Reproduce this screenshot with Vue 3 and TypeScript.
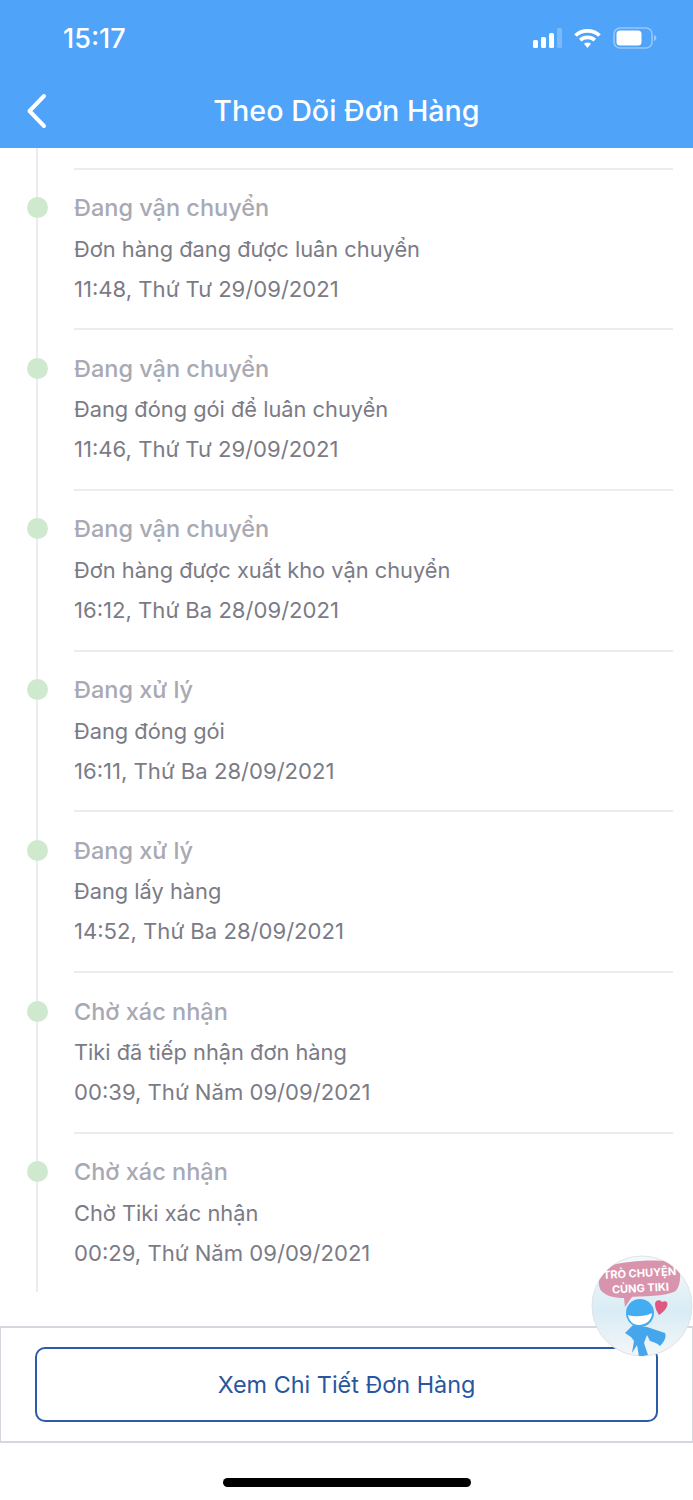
<script setup lang="ts">
interface TrackingStep {
  status: string;
  detail: string;
  time: string;
}

const steps: TrackingStep[] = [
  { status: 'Đang vận chuyển', detail: 'Đơn hàng đang được luân chuyển', time: '11:48, Thứ Tư 29/09/2021' },
  { status: 'Đang vận chuyển', detail: 'Đang đóng gói để luân chuyển', time: '11:46, Thứ Tư 29/09/2021' },
  { status: 'Đang vận chuyển', detail: 'Đơn hàng được xuất kho vận chuyển', time: '16:12, Thứ Ba 28/09/2021' },
  { status: 'Đang xử lý', detail: 'Đang đóng gói', time: '16:11, Thứ Ba 28/09/2021' },
  { status: 'Đang xử lý', detail: 'Đang lấy hàng', time: '14:52, Thứ Ba 28/09/2021' },
  { status: 'Chờ xác nhận', detail: 'Tiki đã tiếp nhận đơn hàng', time: '00:39, Thứ Năm 09/09/2021' },
  { status: 'Chờ xác nhận', detail: 'Chờ Tiki xác nhận', time: '00:29, Thứ Năm 09/09/2021' },
];
</script>

<template>
  <div class="screen">
    <header class="top-bar">
      <div class="status-bar">
        <span class="clock">15:17</span>
        <div class="status-icons">
          <svg width="29" height="20" viewBox="0 0 29 20">
            <rect x="0" y="12" width="5" height="8" rx="1.5" fill="#fff" />
            <rect x="8" y="9" width="5" height="11" rx="1.5" fill="#fff" />
            <rect x="16" y="5" width="5" height="15" rx="1.5" fill="#fff" />
            <rect x="24" y="0" width="5" height="20" rx="1.5" fill="#fff" opacity="0.25" />
          </svg>
          <svg width="27" height="20" viewBox="0 0 27 20" fill="none" stroke="#fff" stroke-width="3.8">
            <path d="M1.5 7.5C8 1.2 19 1.2 25.5 7.5" />
            <path d="M6.2 12.2C10.5 8.4 16.5 8.4 20.8 12.2" />
            <path d="M10 15.8L13.5 20L17 15.8C15 14.2 12 14.2 10 15.8Z" fill="#fff" stroke="none" />
          </svg>
          <svg width="44" height="22" viewBox="0 0 44 22">
            <rect x="1" y="1" width="38" height="20" rx="6" fill="none" stroke="#fff" stroke-opacity="0.4" stroke-width="1.6" />
            <rect x="3.5" y="3.5" width="25" height="15" rx="3.5" fill="#fff" />
            <path d="M41 8C42.6 8.6 43.4 9.6 43.4 11C43.4 12.4 42.6 13.4 41 14Z" fill="#fff" opacity="0.4" />
          </svg>
        </div>
      </div>
      <div class="nav-bar">
        <svg class="back" width="24" height="36" viewBox="0 0 24 36" fill="none" stroke="#fff" stroke-width="4" stroke-linecap="round" stroke-linejoin="round">
          <path d="M19 3L4.5 18L19 33" />
        </svg>
        <h1>Theo Dõi Đơn Hàng</h1>
      </div>
    </header>

    <section class="timeline">
      <div v-for="(step, index) in steps" :key="index" class="step">
        <span class="dot"></span>
        <div class="step-title">{{ step.status }}</div>
        <div class="step-detail">{{ step.detail }}</div>
        <div class="step-time">{{ step.time }}</div>
      </div>
    </section>

    <footer class="action-panel">
      <button class="detail-btn" type="button">Xem Chi Tiết Đơn Hàng</button>
      <div class="chat-badge">
        <svg width="102" height="102" viewBox="0 0 102 102">
          <defs>
            <linearGradient id="chatBg" x1="0" y1="0" x2="0" y2="1">
              <stop offset="0" stop-color="#f6f9fb" />
              <stop offset="0.55" stop-color="#d9ecf5" />
              <stop offset="1" stop-color="#f4f6f8" />
            </linearGradient>
            <clipPath id="chatClip"><circle cx="51" cy="51" r="50" /></clipPath>
          </defs>
          <circle cx="51" cy="51" r="50" fill="url(#chatBg)" stroke="#dfe3e8" stroke-width="1" />
          <g clip-path="url(#chatClip)">
            <path d="M16 12C28 6 72 3 84 8C91 11 91 33 83 37C70 42 48 41 41 42L34 52L33 43C24 43 13 41 9 34C6 26 9 16 16 12Z" fill="#d994ad" />
            <path d="M64 49C64 45 69 44 71 47C74 45 78 47 76 51C75 55 71 58 68 60C66 57 64 53 64 49Z" fill="#e0587f" />
            <path d="M42 70L56 72L74 78C76 83 72 88 69 91C66 88 62 87 59 86L56 80L53 88L57 100L48 102L46 90L41 98L43 86L40 82L34 78Z" fill="#46a6ec" />
            <circle cx="49" cy="58" r="14" fill="#44adf2" />
            <path d="M37 60C42 62 54 62 61 58C61 65 55 70 48 70C42 70 38 66 37 60Z" fill="#fff" />
          </g>
        </svg>
        <span class="chat-label">TRÒ CHUYỆN<br />CÙNG TIKI</span>
      </div>
    </footer>

    <div class="home-indicator"></div>
  </div>
</template>

<style scoped>
.screen {
  width: 693px;
  height: 1500px;
  background: #fff;
  display: flex;
  flex-direction: column;
  overflow: hidden;
  font-family: Inter, "Noto Sans", sans-serif;
}

.top-bar {
  height: 148px;
  flex-shrink: 0;
  background: #4fa3f8;
  color: #fff;
}

.status-bar {
  height: 76px;
  padding: 0 36px 0 63px;
  display: flex;
  align-items: center;
  justify-content: space-between;
}

.clock {
  font-size: 27px;
  font-weight: 500;
}

.status-icons {
  display: flex;
  align-items: center;
  gap: 12px;
}

.nav-bar {
  position: relative;
  height: 70px;
  padding-bottom: 2px;
  box-sizing: border-box;
  display: flex;
  align-items: center;
  justify-content: center;
}

.back {
  position: absolute;
  left: 25px;
  top: 17px;
}

.nav-bar h1 {
  margin: 0;
  font-size: 28.7px;
  font-weight: 500;
}

.timeline {
  position: relative;
  height: 1144px;
  flex-shrink: 0;
  padding: 19.7px 20px 0 74px;
  box-sizing: border-box;
}

/* vertical rail behind the dots */
.timeline::before {
  content: "";
  position: absolute;
  left: 36px;
  top: 0;
  width: 2px;
  height: 1144px;
  background: #ececf0;
}

.step {
  position: relative;
  height: 160.7px;
  box-sizing: border-box;
  padding-top: 21.4px;
  border-top: 2px solid #ececf0;
}

.dot {
  position: absolute;
  left: -47px;
  top: 27.4px;
  width: 21px;
  height: 21px;
  border-radius: 50%;
  background: #cfe9cf;
}

.step-title {
  height: 34px;
  font-size: 23.5px;
  line-height: 34px;
  font-weight: 500;
  color: #a9a9b3;
}

.step-detail {
  height: 40px;
  margin-top: 3.6px;
  font-size: 21.8px;
  line-height: 40px;
  color: #7b7b86;
}

.step-time {
  height: 40px;
  font-size: 22.1px;
  line-height: 40px;
  color: #7b7b86;
}

.action-panel {
  position: relative;
  margin-top: 34px;
  height: 117px;
  flex-shrink: 0;
  box-sizing: border-box;
  padding: 19px 34px 0;
  border: 1px solid #d6d6de;
  border-width: 2px 1px;
}

.detail-btn {
  display: block;
  width: 100%;
  height: 75px;
  padding: 0;
  background: #fff;
  border: 2px solid #2c5ba8;
  border-radius: 10px;
  color: #28569f;
  font-family: inherit;
  font-size: 23.4px;
}

.chat-badge {
  position: absolute;
  right: -1px;
  top: -73px;
  width: 102px;
  height: 102px;
}

.chat-label {
  position: absolute;
  left: 7px;
  top: 11px;
  width: 84px;
  font-size: 11px;
  line-height: 15px;
  font-weight: 700;
  color: #fff;
  text-align: center;
  transform: rotate(-3deg);
}

.home-indicator {
  width: 248px;
  height: 9px;
  margin: 35px auto 0;
  border-radius: 5px;
  background: #000;
}
</style>
